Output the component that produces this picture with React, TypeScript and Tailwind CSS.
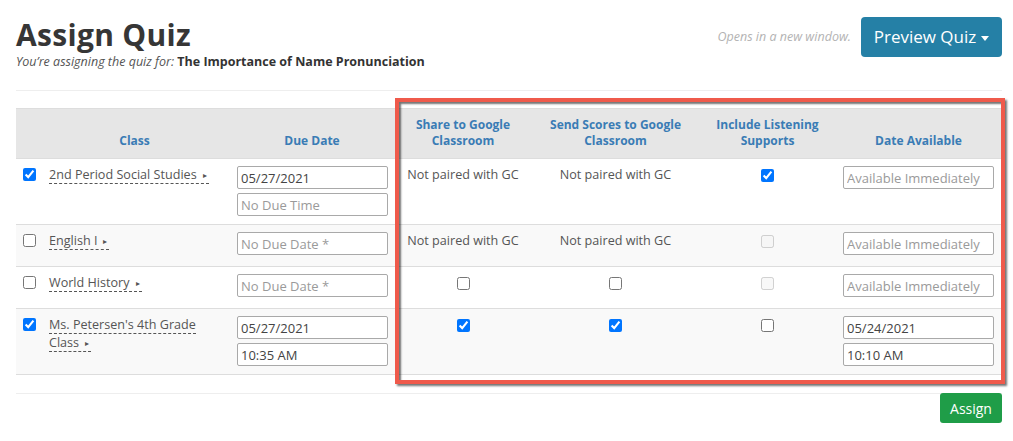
import React from "react";

const cols = "grid grid-cols-[24px_189px_166px_136px_169px_135px_167px]";

function Cb({ checked, disabled }: { checked?: boolean; disabled?: boolean }) {
  return (
    <input
      type="checkbox"
      defaultChecked={checked}
      disabled={disabled}
      className="m-0 w-[13px] h-[13px] block"
    />
  );
}

function ClassLink({ children }: { children: React.ReactNode }) {
  return (
    <span className="border-b border-dashed border-[#555] text-[#555]">
      {children}
      <span className="inline-block text-[8px] align-[1px] ml-[6px] mr-[2px]">▸</span>
    </span>
  );
}

function Field({ value, placeholder, className }: { value?: string; placeholder?: string; className?: string }) {
  return (
    <input
      type="text"
      defaultValue={value}
      placeholder={placeholder}
      className={
        "block w-[151px] h-[23px] border border-[#a9a9a9] rounded-[2px] px-[3px] text-[13px] text-[#444] placeholder:text-[#9a9a9a] bg-white outline-none " +
        (className || "")
      }
    />
  );
}

type Row = {
  checked: boolean;
  name: string;
  due: { value?: string; placeholder?: string };
  dueTime?: { value?: string; placeholder?: string };
  share: "text" | "on" | "off";
  send: "text" | "on" | "off";
  listen: "on" | "off" | "disabled";
  avail: { value?: string; placeholder?: string };
  availTime?: string;
  tall: boolean;
  striped: boolean;
};

const rows: Row[] = [
  {
    checked: true,
    name: "2nd Period Social Studies",
    due: { value: "05/27/2021" },
    dueTime: { placeholder: "No Due Time" },
    share: "text",
    send: "text",
    listen: "on",
    avail: { placeholder: "Available Immediately" },
    tall: true,
    striped: false,
  },
  {
    checked: false,
    name: "English I",
    due: { placeholder: "No Due Date *" },
    share: "text",
    send: "text",
    listen: "disabled",
    avail: { placeholder: "Available Immediately" },
    tall: false,
    striped: true,
  },
  {
    checked: false,
    name: "World History",
    due: { placeholder: "No Due Date *" },
    share: "off",
    send: "off",
    listen: "disabled",
    avail: { placeholder: "Available Immediately" },
    tall: false,
    striped: false,
  },
  {
    checked: true,
    name: "Ms. Petersen's 4th Grade Class",
    due: { value: "05/27/2021" },
    dueTime: { value: "10:35 AM" },
    share: "on",
    send: "on",
    listen: "off",
    avail: { value: "05/24/2021" },
    availTime: "10:10 AM",
    tall: true,
    striped: true,
  },
];

function GcCell({ kind }: { kind: "text" | "on" | "off" }) {
  if (kind === "text") {
    return <div className="pt-[7px] text-center leading-[18px] text-[12.6px] text-[#555]">Not paired with GC</div>;
  }
  return (
    <div className="pt-[10px] flex justify-center">
      <Cb checked={kind === "on"} />
    </div>
  );
}

export default function App() {
  return (
    <div className="relative w-[1013px] h-[441px] bg-white overflow-hidden pl-[16px] pr-[11px] pt-[17px] font-['Open_Sans',sans-serif] text-[#555]">
      <div className="flex justify-between items-start">
        <div>
          <h1 className="mt-[1px] text-[30px] leading-[33px] font-bold text-[#363636] tracking-[0.3px]">
            Assign Quiz
          </h1>
          <p className="mt-[2px] text-[12.5px] leading-[18px] text-[#333]">
            <span className="italic text-[#555]">You’re assigning the quiz for:</span>{" "}
            <span className="font-bold text-[#333]">The Importance of Name Pronunciation</span>
          </p>
        </div>
        <div className="flex items-center gap-[10px]">
          <span className="italic text-[12.5px] text-[#b3b3b3]">Opens in a new window.</span>
          <button className="h-[40px] w-[141px] rounded-[4px] bg-[#2580a6] text-white text-[17px] flex items-center justify-center gap-[5px]">
            <span>Preview Quiz</span>
            <span className="inline-block w-0 h-0 border-l-[4px] border-r-[4px] border-t-[5px] border-l-transparent border-r-transparent border-t-white mt-[2px]"></span>
          </button>
        </div>
      </div>

      <div className="mt-[19px] border-t border-[#eeeeee]"></div>

      <div className="mt-[17px] border-t border-[#dddddd]">
        <div className={cols + " bg-[#e6e6e6] h-[49px] text-[12px] leading-[16px] font-bold text-[#3a7cb5]"}>
          <div></div>
          {["Class", "Due Date", "Share to Google Classroom", "Send Scores to Google Classroom", "Include Listening Supports", "Date Available"].map((h, i) => (
            <div key={i} className="flex items-end justify-center text-center pb-[9px] px-[8px]">
              <span>{h}</span>
            </div>
          ))}
        </div>
        {rows.map((r, idx) => (
          <div
            key={idx}
            className={
              cols +
              " border-t border-[#dddddd] " +
              (r.tall ? "h-[66px] " : "h-[42px] ") +
              (r.striped ? "bg-[#f9f9f9]" : "bg-white")
            }
          >
            <div className="pl-[7px] pt-[9px]">
              <Cb checked={r.checked} />
            </div>
            <div className="pl-[9px] pr-[2px] pt-[7px] text-[12.6px] leading-[18px]">
              <ClassLink>{r.name}</ClassLink>
            </div>
            <div className="pl-[8px] pt-[7px]">
              <Field value={r.due.value} placeholder={r.due.placeholder} />
              {r.dueTime && <Field value={r.dueTime.value} placeholder={r.dueTime.placeholder} className="mt-[4px]" />}
            </div>
            <GcCell kind={r.share} />
            <GcCell kind={r.send} />
            <div className="pt-[10px] flex justify-center">
              <Cb checked={r.listen === "on"} disabled={r.listen === "disabled"} />
            </div>
            <div className="pl-[8px] pt-[7px]">
              <Field value={r.avail.value} placeholder={r.avail.placeholder} />
              {r.availTime && <Field value={r.availTime} className="mt-[4px]" />}
            </div>
          </div>
        ))}
        <div className="border-t border-[#dddddd]"></div>
      </div>

      <div className="mt-[18px] border-t border-[#eeeeee] flex justify-end">
        <button className="-mt-px w-[62px] h-[30px] rounded-[3px] bg-[#1f9d48] text-white text-[14px]">Assign</button>
      </div>

      <div className="absolute left-[395px] top-[98px] w-[610px] h-[286px] border-[4px] border-[#ef5a4b] shadow-[2px_2px_2px_rgba(0,0,0,0.55),inset_2px_2px_2px_rgba(0,0,0,0.55)] pointer-events-none"></div>
    </div>
  );
}
